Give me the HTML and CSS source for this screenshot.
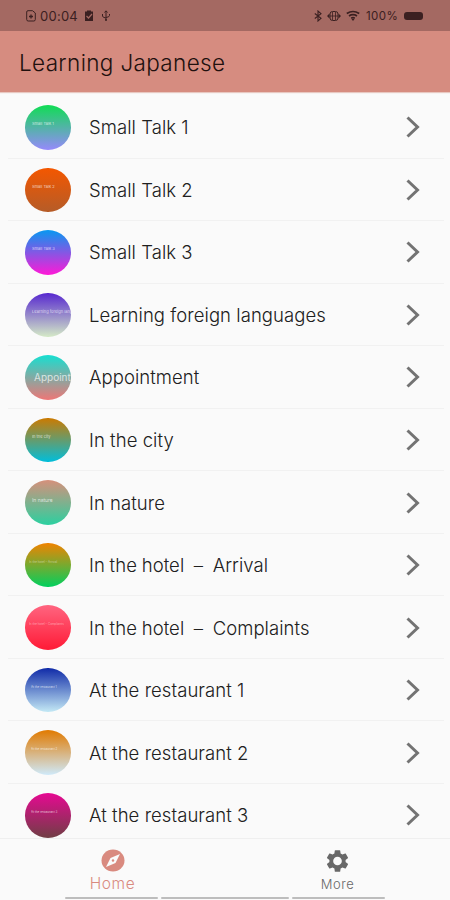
FILE: index.html
```html
<!DOCTYPE html>
<html lang="en">
<head>
<meta charset="utf-8">
<title>Learning Japanese</title>
<link rel="stylesheet" href="styles.css">
</head>
<body>
<div class="status">
  <div class="status-left">
    <svg width="12" height="12" viewBox="0 0 12 12" fill="none" stroke="currentColor"><path d="M3 .7h4.500L10.300 3v6.500q0 1.500-1.500 1.500H3.200q-1.500 0-1.500-1.500V2Q1.700.7 3 .7z"/><path d="M4 6.500h4M6 4.500v4" stroke-width="1.300"/></svg>
    <span class="clock">00:04</span>
    <svg class="task" width="10" height="12" viewBox="0 0 10 12"><path d="M1 1.500h2V.5h4v1h2V11H1z" fill="currentColor"/><path d="M2.500 6l2 2 3.500-4" fill="none" stroke="#a46962" stroke-width="1.200"/></svg>
    <svg class="usb" width="10" height="12" viewBox="0 0 10 12" fill="none" stroke="currentColor"><path d="M5 1v9M1.500 4v2q0 1.500 3.500 2M8.500 4v1.500q0 1.500-3.500 2M3.500 2.500L5 .8l1.500 1.700"/><circle cx="5" cy="10" r="1" fill="currentColor" stroke="none"/></svg>
  </div>
  <div class="status-right">
    <svg width="8" height="12" viewBox="0 0 8 12" fill="none" stroke="currentColor" stroke-width="1.100"><path d="M.8 3.500L7 8.300 4 11V1l3 2.700L.8 8.500"/></svg>
    <svg class="vibrate" width="16" height="12" viewBox="0 0 16 12" fill="none" stroke="currentColor"><path d="M1 6l2.500-2.500v5zM15 6l-2.500-2.500v5z" fill="currentColor" stroke="none"/><rect x="4" y="1.500" width="8" height="9" rx="2.500"/><path d="M6.500 2v8M9.500 2v8M4 6h8" stroke-width=".8"/></svg>
    <svg class="wifi" width="14" height="12" viewBox="0 0 14 12" fill="none" stroke="currentColor" stroke-width="1.700"><path d="M.8 3.500q6.200-4 12.400 0M3 6q4-2.600 8 0M5.200 8.200q1.800-1 3.600 0"/><path d="M5.500 9h3L7 11z" fill="currentColor" stroke="none"/></svg>
    <span class="percent">100%</span>
    <span class="battery"></span>
  </div>
</div>
<header class="appbar"><h1>Learning Japanese</h1></header>
<main class="list">
  <a class="row"><span class="disc green"><i>Small Talk 1</i></span><span class="label">Small Talk 1</span><svg class="chevron" viewBox="0 0 14 22"><path d="M1.500 1.500L11.500 11l-10 9.500"/></svg></a>
  <a class="row"><span class="disc orange"><i>Small Talk 2</i></span><span class="label">Small Talk 2</span><svg class="chevron" viewBox="0 0 14 22"><path d="M1.500 1.500L11.500 11l-10 9.500"/></svg></a>
  <a class="row"><span class="disc magenta"><i>Small Talk 3</i></span><span class="label">Small Talk 3</span><svg class="chevron" viewBox="0 0 14 22"><path d="M1.500 1.500L11.500 11l-10 9.500"/></svg></a>
  <a class="row"><span class="disc violet"><i>Learning foreign languages</i></span><span class="label">Learning foreign languages</span><svg class="chevron" viewBox="0 0 14 22"><path d="M1.500 1.500L11.500 11l-10 9.500"/></svg></a>
  <a class="row"><span class="disc teal"><i class="big">Appointment</i></span><span class="label">Appointment</span><svg class="chevron" viewBox="0 0 14 22"><path d="M1.500 1.500L11.500 11l-10 9.500"/></svg></a>
  <a class="row"><span class="disc city"><i>In the city</i></span><span class="label">In the city</span><svg class="chevron" viewBox="0 0 14 22"><path d="M1.500 1.500L11.500 11l-10 9.500"/></svg></a>
  <a class="row"><span class="disc nature"><i class="medium">In nature</i></span><span class="label">In nature</span><svg class="chevron" viewBox="0 0 14 22"><path d="M1.500 1.500L11.500 11l-10 9.500"/></svg></a>
  <a class="row"><span class="disc arrival"><i class="faint">In the hotel – Arrival</i></span><span class="label dashed">In the hotel&nbsp; – &nbsp;Arrival</span><svg class="chevron" viewBox="0 0 14 22"><path d="M1.500 1.500L11.500 11l-10 9.500"/></svg></a>
  <a class="row"><span class="disc red"><i class="faint">In the hotel – Complaints</i></span><span class="label dashed">In the hotel&nbsp; – &nbsp;Complaints</span><svg class="chevron" viewBox="0 0 14 22"><path d="M1.500 1.500L11.500 11l-10 9.500"/></svg></a>
  <a class="row"><span class="disc blue"><i class="small">At the restaurant 1</i></span><span class="label">At the restaurant 1</span><svg class="chevron" viewBox="0 0 14 22"><path d="M1.500 1.500L11.500 11l-10 9.500"/></svg></a>
  <a class="row"><span class="disc amber"><i class="small">At the restaurant 2</i></span><span class="label">At the restaurant 2</span><svg class="chevron" viewBox="0 0 14 22"><path d="M1.500 1.500L11.500 11l-10 9.500"/></svg></a>
  <a class="row"><span class="disc plum"><i class="small">At the restaurant 3</i></span><span class="label">At the restaurant 3</span><svg class="chevron" viewBox="0 0 14 22"><path d="M1.500 1.500L11.500 11l-10 9.500"/></svg></a>
</main>
<nav class="tabs">
  <a class="tab active"><svg width="24" height="23" viewBox="0 0 24 23"><ellipse cx="12" cy="11.500" rx="11.500" ry="11" fill="currentColor"/><path d="M19 5l-4.500 9L5 18l4.500-9z" fill="#fafafa"/><circle cx="12" cy="11.500" r="1.200" fill="currentColor"/></svg><span>Home</span></a>
  <a class="tab"><svg width="27" height="26" viewBox="0 0 24 24"><path fill="currentColor" d="M19.430 12.980c.04-.32.07-.64.07-.98s-.03-.66-.07-.98l2.110-1.650c.19-.15.24-.42.12-.64l-2-3.460c-.12-.22-.39-.3-.61-.22l-2.490 1c-.52-.4-1.080-.73-1.690-.98l-.38-2.650C14.460 2.180 14.250 2 14 2h-4c-.25 0-.46.18-.49.42l-.38 2.650c-.61.25-1.170.59-1.690.98l-2.490-1c-.23-.09-.49 0-.61.22l-2 3.460c-.13.22-.07.49.12.64l2.110 1.650c-.04.32-.07.65-.07.98s.03.66.07.98l-2.110 1.650c-.19.15-.24.42-.12.64l2 3.460c.12.22.39.3.61.22l2.490-1c.52.4 1.080.73 1.690.98l.38 2.650c.03.24.24.42.49.42h4c.25 0 .46-.18.49-.42l.38-2.650c.61-.25 1.170-.59 1.690-.98l2.490 1c.23.09.49 0 .61-.22l2-3.460c.12-.22.07-.49-.12-.64zM12 16a4 4 0 1 1 0-8 4 4 0 0 1 0 8z"/></svg><span>More</span></a>
</nav>
<div class="handles"><span></span><span></span><span></span></div>
</body>
</html>
```
FILE: styles.css
```css
* { box-sizing: border-box; }
body {
  margin: 0;
  width: 450px;
  height: 900px;
  overflow: hidden;
  display: flex;
  flex-direction: column;
  background: #fafafa;
  color: #202020;
  font-family: Inter, "Liberation Sans", sans-serif;
}
.status {
  flex: none;
  height: 31px;
  padding: 1px 27px 0 25px;
  display: flex;
  justify-content: space-between;
  align-items: center;
  background: #a46962;
  color: #3b2021;
}
.status-left, .status-right { display: flex; align-items: center; }
.status svg { display: block; }
.clock { margin-left: 3px; font-size: 13px; letter-spacing: .25px; }
.task { margin-left: 6px; }
.usb { margin-left: 7px; }
.vibrate { margin-left: 4px; }
.wifi { margin-left: 4px; }
.percent { margin-left: 6px; width: 38px; font-size: 11.500px; letter-spacing: .4px; }
.battery { width: 19px; height: 8px; border-radius: 3px; background: #3b2021; }
.appbar {
  flex: none;
  height: 61px;
  padding: 1px 19px 0;
  display: flex;
  align-items: center;
  background: #d68c80;
  box-shadow: 0 1px 1px #e8c8c1;
}
h1 { margin: 0; font-size: 22.500px; font-weight: 300; letter-spacing: .35px; color: #21100e; }
.list { flex: none; height: 746px; padding-top: 4px; overflow: hidden; }
.row {
  height: 62.550px;
  margin: 0 6px 0 8px;
  padding: 1px 24px 0 17px;
  display: flex;
  align-items: center;
  border-bottom: 1px solid #f1f1f1;
}
.disc {
  flex: none;
  width: 46px;
  height: 44.500px;
  padding-left: 7px;
  border-radius: 50%;
  overflow: hidden;
  white-space: nowrap;
  background: linear-gradient(var(--top), var(--bottom));
}
.disc i { display: block; overflow: hidden; padding-top: 17px; font-size: 4px; line-height: 4px; font-style: normal; color: rgba(255,255,255,.7); }
.disc .medium { font-size: 5px; line-height: 6px; }
.disc .big { padding-top: 16px; padding-left: 2px; font-size: 10px; line-height: 13px; }
.disc .small { font-size: 3px; margin-left: -1px; }
.disc .faint { font-size: 3px; margin-left: -3px; opacity: .65; }
.green { --top: #10dd54; --bottom: #9689fb; }
.orange { --top: #f45700; --bottom: #b55c28; }
.magenta { --top: #0798f1; --bottom: #ff18d7; }
.violet { --top: #5728cf; --bottom: #d5eac7; }
.teal { --top: #16dfd1; --bottom: #ee7676; }
.city { --top: #cc7a00; --bottom: #00bedb; }
.nature { --top: #d6907b; --bottom: #2bd0a0; }
.arrival { --top: #f18300; --bottom: #00d05e; }
.red { --top: #ff6580; --bottom: #ff1a36; }
.blue { --top: #102ba8; --bottom: #c4e9f5; }
.amber { --top: #e17a00; --bottom: #cfeafa; }
.plum { --top: #e60992; --bottom: #703e45; }
.label { flex: 1; margin-left: 18px; font-size: 18.500px; font-weight: 300; letter-spacing: .06px; white-space: nowrap; }
.dashed { word-spacing: -.5px; }
.chevron { flex: none; width: 14px; height: 22px; fill: none; stroke: #737373; stroke-width: 3; }
.tabs {
  flex: none;
  height: 59px;
  display: flex;
  border-top: 1px solid #efefef;
}
.tab { flex: 1; height: 58px; padding-top: 9px; display: flex; flex-direction: column; align-items: center; color: #686868; font-size: 13px; font-weight: 300; letter-spacing: .5px; }
.tab span { line-height: 16px; margin-top: 2px; }
.tab svg { flex: none; }
.tab.active { padding-top: 10px; color: #d98a7f; font-size: 15.500px; letter-spacing: .6px; }
.tab.active span { margin-top: 4px; }
.handles { flex: none; height: 3px; display: grid; grid-template-columns: 93px 128px 93px; justify-content: center; column-gap: 3px; }
.handles span { height: 2px; background: #bdbdbd; border-radius: 1px; }
```
